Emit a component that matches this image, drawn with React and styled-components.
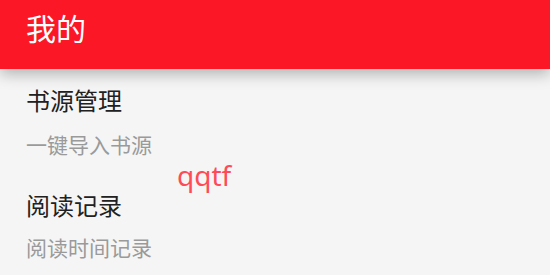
import React from "react";
import styled, { createGlobalStyle } from "styled-components";

const GlobalStyle = createGlobalStyle`
  html, body {
    margin: 0;
    padding: 0;
    background: #f5f5f5;
  }
  body {
    font-family: "Noto Sans CJK SC", "Noto Sans", sans-serif;
  }
`;

const Page = styled.div`
  width: 550px;
  height: 275px;
  overflow: hidden;
  background: #f5f5f5;
  position: relative;
`;

const Header = styled.header`
  position: relative;
  z-index: 1;
  height: 69px;
  box-sizing: border-box;
  padding: 10px 26px 0;
  background: #fc1727;
  box-shadow: 0 5px 14px rgba(0, 0, 0, 0.28);
  color: #ffffff;
  font-size: 30px;
  line-height: 34px;
`;

const List = styled.div`
  padding: 0 26px;
`;

const Item = styled.div`
  display: flex;
  flex-direction: column;
  padding-top: ${(p) => p.$top}px;
`;

const Title = styled.div`
  font-size: 24px;
  line-height: 32px;
  color: #212121;
`;

const Sub = styled.div`
  margin-top: ${(p) => p.$gap}px;
  font-size: 21px;
  line-height: 30px;
  color: #9a9a9a;
`;

const Tag = styled.span`
  position: absolute;
  left: 177px;
  top: 156px;
  font-family: "Noto Sans", sans-serif;
  font-size: 28px;
  color: #ff4b57;
`;

const items = [
  { title: "书源管理", sub: "一键导入书源", top: 15, gap: 13 },
  { title: "阅读记录", sub: "阅读时间记录", top: 30, gap: 11 },
];

export default function App() {
  return (
    <Page>
      <GlobalStyle />
      <Header>我的</Header>
      <List>
        {items.map((it) => (
          <Item key={it.title} $top={it.top}>
            <Title>{it.title}</Title>
            <Sub $gap={it.gap}>{it.sub}</Sub>
          </Item>
        ))}
      </List>
      <Tag>qqtf</Tag>
    </Page>
  );
}
